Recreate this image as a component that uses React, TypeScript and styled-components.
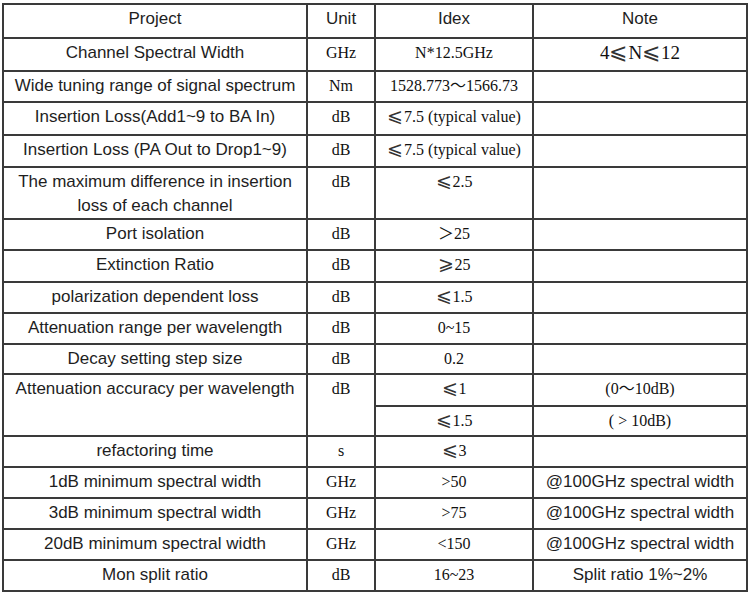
import React from "react";
import styled, { createGlobalStyle } from "styled-components";

const Global = createGlobalStyle`
  html, body { margin: 0; padding: 0; background: #ffffff; }
  body { width: 750px; height: 594px; overflow: hidden; }
`;

const SANS = `"Liberation Sans", Arial, "Noto Sans CJK SC", sans-serif`;
const SERIF = `"Liberation Serif", "Times New Roman", "Noto Sans CJK SC", "DejaVu Sans", serif`;

const Table = styled.table`
  margin: 3px 0 0 2px;
  border-collapse: collapse;
  table-layout: fixed;
  width: 746px;
  border: 2px solid #3a3a3a;
`;

const Col = styled.col<{ $w: number }>`
  width: ${(p) => p.$w}px;
`;

const Row = styled.tr<{ $h: number }>`
  height: ${(p) => p.$h}px;
`;

const Cell = styled.td<{ $serif?: boolean; $size?: number }>`
  border: 2px solid #3a3a3a;
  padding: 2px 2px 0;
  vertical-align: top;
  text-align: center;
  font-weight: normal;
  color: ${(p) => (p.$serif ? "#111" : "#1e1e1e")};
  font-family: ${(p) => (p.$serif ? SERIF : SANS)};
  font-size: ${(p) => p.$size ?? (p.$serif ? 16 : 17)}px;
  line-height: 24px;
  white-space: nowrap;
`;

const Sym = styled.span`
  font-family: "DejaVu Sans", "Noto Sans CJK SC", sans-serif;
  font-weight: 200;
  color: #333;
  font-size: 1.18em;
  line-height: 0;
  margin-right: 1px;
`;

function withSyms(text?: string): React.ReactNode {
  if (!text) return "";
  const parts = text.split(/([⩽⩾])/);
  return parts.map((p, i) => (p === "⩽" || p === "⩾" ? <Sym key={i}>{p}</Sym> : p));
}

type R = {
  h: number;
  project?: React.ReactNode;
  unit?: string;
  idex: string;
  note?: string;
  noteSerif?: boolean;
  noteSize?: number;
  span?: number;
  skipLeft?: boolean;
};

const rows: R[] = [
  { h: 33, project: "Channel Spectral Width", unit: "GHz", idex: "N*12.5GHz", note: "4⩽N⩽12", noteSerif: true, noteSize: 19 },
  { h: 31, project: "Wide tuning range of signal spectrum", unit: "Nm", idex: "1528.773～1566.73" },
  { h: 33, project: "Insertion Loss(Add1~9 to BA In)", unit: "dB", idex: "⩽7.5 (typical value)" },
  { h: 32, project: "Insertion Loss (PA Out to Drop1~9)", unit: "dB", idex: "⩽7.5 (typical value)" },
  {
    h: 51,
    project: (
      <>
        The maximum difference in insertion
        <br />
        loss of each channel
      </>
    ),
    unit: "dB",
    idex: "⩽2.5",
  },
  { h: 31, project: "Port isolation", unit: "dB", idex: "＞25" },
  { h: 32, project: "Extinction Ratio", unit: "dB", idex: "⩾25" },
  { h: 31, project: "polarization dependent loss", unit: "dB", idex: "⩽1.5" },
  { h: 31, project: "Attenuation range per wavelength", unit: "dB", idex: "0~15" },
  { h: 30, project: "Decay setting step size", unit: "dB", idex: "0.2" },
  { h: 32, project: "Attenuation accuracy per wavelength", unit: "dB", idex: "⩽1", note: "(0～10dB)", noteSerif: true, span: 2 },
  { h: 30, skipLeft: true, idex: "⩽1.5", note: "( > 10dB)", noteSerif: true },
  { h: 31, project: "refactoring time", unit: "s", idex: "⩽3" },
  { h: 31, project: "1dB minimum spectral width", unit: "GHz", idex: ">50", note: "@100GHz spectral width" },
  { h: 31, project: "3dB minimum spectral width", unit: "GHz", idex: ">75", note: "@100GHz spectral width" },
  { h: 31, project: "20dB minimum spectral width", unit: "GHz", idex: "<150", note: "@100GHz spectral width" },
  { h: 31, project: "Mon split ratio", unit: "dB", idex: "16~23", note: "Split ratio 1%~2%" },
];

export default function App() {
  return (
    <>
      <Global />
      <Table>
        <colgroup>
          <Col $w={304} />
          <Col $w={68} />
          <Col $w={158} />
          <Col $w={214} />
        </colgroup>
        <thead>
          <Row $h={34}>
            <Cell as="th">Project</Cell>
            <Cell as="th">Unit</Cell>
            <Cell as="th">Idex</Cell>
            <Cell as="th">Note</Cell>
          </Row>
        </thead>
        <tbody>
          {rows.map((r, i) => (
            <Row key={i} $h={r.h}>
              {!r.skipLeft && (
                <>
                  <Cell rowSpan={r.span}>{r.project}</Cell>
                  <Cell $serif rowSpan={r.span}>
                    {r.unit}
                  </Cell>
                </>
              )}
              <Cell $serif>{withSyms(r.idex)}</Cell>
              <Cell $serif={r.noteSerif} $size={r.noteSize}>
                {withSyms(r.note)}
              </Cell>
            </Row>
          ))}
        </tbody>
      </Table>
    </>
  );
}
